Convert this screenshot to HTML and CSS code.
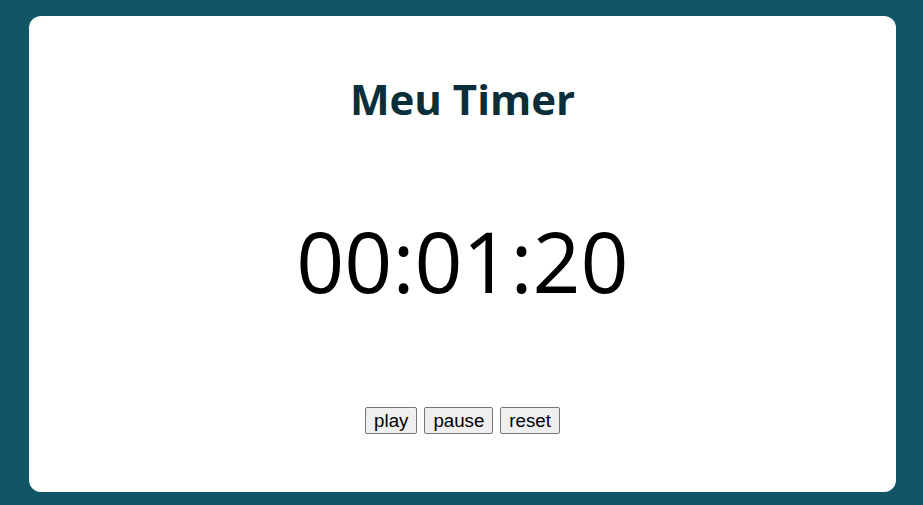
FILE: index.html
```html
<!DOCTYPE html>
<html lang="pt">
<head>
<meta charset="utf-8">
<title>Meu Timer</title>
<link rel="stylesheet" href="styles.css">
</head>
<body>
<main class="card">
  <h1 class="title">Meu Timer</h1>
  <div class="time">00:01:20</div>
  <div class="controls">
    <button class="btn">play</button>
    <button class="btn">pause</button>
    <button class="btn">reset</button>
  </div>
</main>
</body>
</html>
```
FILE: styles.css
```css
html, body {
  margin: 0;
  height: 100%;
}
body {
  background: #115667;
  padding: 16px 27px 13px 29px;
  box-sizing: border-box;
  display: flex;
}
.card {
  flex: 1;
  background: #fff;
  border-radius: 12px;
  display: flex;
  flex-direction: column;
  align-items: center;
  font-family: "Open Sans", sans-serif;
}
.title {
  margin: 54px 0 0;
  font-size: 42px;
  font-weight: 700;
  color: #0a2f3a;
  line-height: 57px;
}
.time {
  margin-top: 77px;
  font-size: 84px;
  line-height: 114px;
  color: #000;
}
.controls {
  margin-top: 89px;
  display: flex;
  gap: 7px;
}
.btn {
  font-family: "Liberation Sans", Arial, sans-serif;
  font-size: 18.7px;
  padding: 1px 8px;
  height: 27px;
  background: #efefef;
  border: 1px solid #767676;
  border-radius: 2px;
  color: #000;
}
```
